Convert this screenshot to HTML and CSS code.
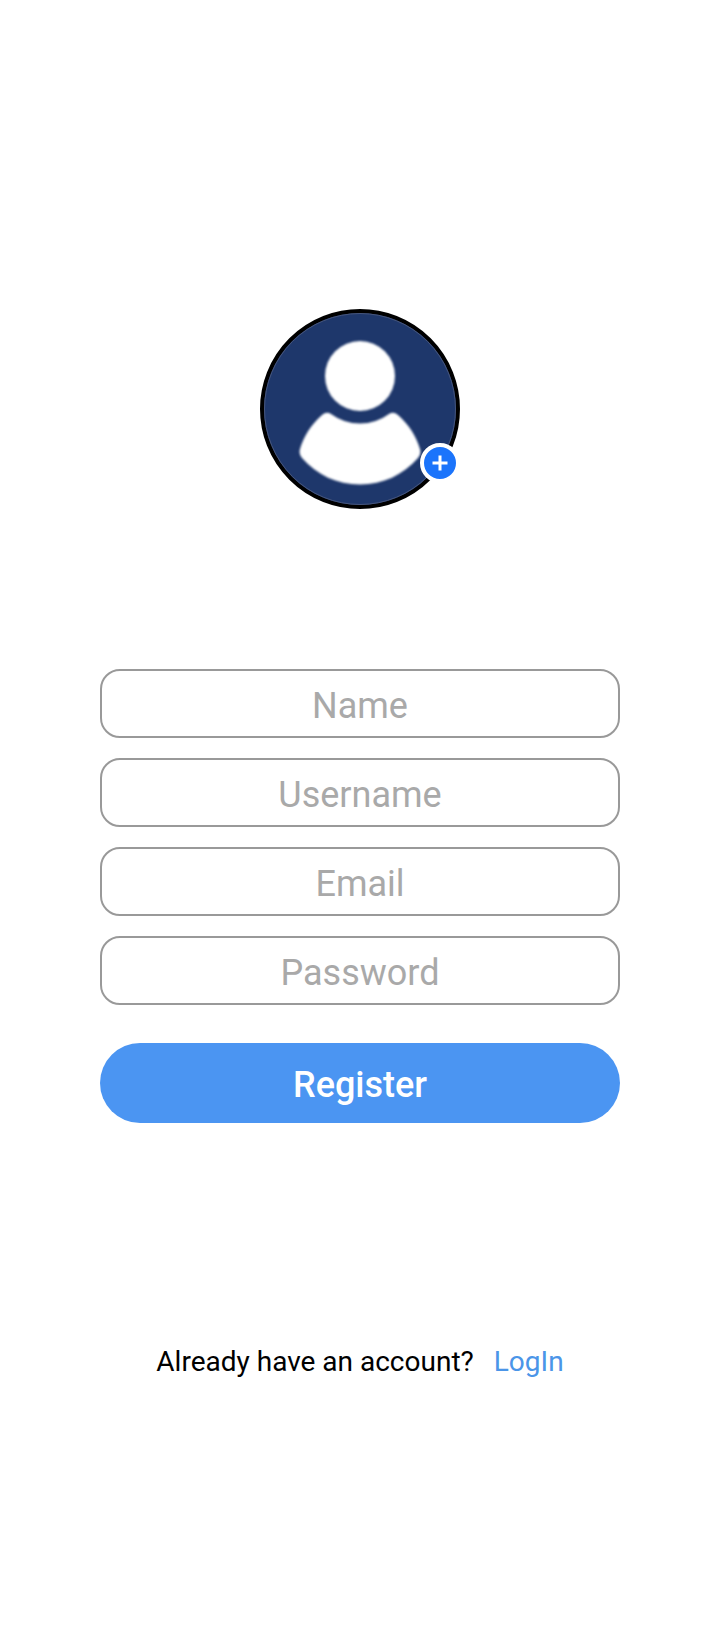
FILE: index.html
```html
<!DOCTYPE html>
<html lang="en">
<head>
  <meta charset="utf-8">
  <meta name="viewport" content="width=device-width, initial-scale=1">
  <title>Register</title>
  <link rel="stylesheet" href="styles.css">
</head>
<body>
  <main class="page">
    <div class="avatar">
      <svg class="avatar-picture" viewBox="0 0 200 200" aria-hidden="true">
        <circle cx="100" cy="100" r="98" fill="#1e376b" stroke="#000" stroke-width="4"/>
        <circle cx="100" cy="100" r="95.5" fill="none" stroke="#46557b" stroke-width="1"/>
        <g class="person" fill="#fff">
          <circle cx="100" cy="67" r="35"/>
          <path d="M71 105Q84 114.500 100 114.500T129 105Q133.500 102 138 106C149 115.500 156.500 128 160 140Q161.500 145 158 149C143 166 123 175.500 100 175.500S57 166 42 149Q38.500 145 40 140C43.500 128 51 115.500 62 106Q66.500 102 71 105Z"/>
        </g>
      </svg>
      <button class="avatar-add" type="button" aria-label="Add photo">
        <svg class="plus" viewBox="0 0 16 16" aria-hidden="true">
          <path d="M8 0.500V15.500M0.500 8H15.500" stroke="#fff" stroke-width="3"/>
        </svg>
      </button>
    </div>
    <form class="form">
      <input class="field" type="text" placeholder="Name" aria-label="Name">
      <input class="field" type="text" placeholder="Username" aria-label="Username">
      <input class="field" type="email" placeholder="Email" aria-label="Email">
      <input class="field" type="password" placeholder="Password" aria-label="Password">
      <button class="submit" type="submit">Register</button>
    </form>
    <p class="footer">
      <span>Already have an account?</span>
      <a class="login" href="#">LogIn</a>
    </p>
  </main>
</body>
</html>
```
FILE: styles.css
```css
* {
  box-sizing: border-box;
}

body {
  margin: 0;
  background: #fff;
  color: #000;
  font-family: Roboto, "Liberation Sans", sans-serif;
}

.page {
  display: flex;
  flex-direction: column;
  align-items: center;
  min-height: 100vh;
  padding: 309px 100px 100px;
}

.avatar {
  position: relative;
  width: 200px;
  height: 200px;
}

.avatar-picture {
  display: block;
  width: 100%;
  height: 100%;
}

.person {
  filter: blur(1px);
}

.avatar-add {
  position: absolute;
  right: 0;
  bottom: 26px;
  display: grid;
  place-items: center;
  width: 40px;
  height: 40px;
  padding: 0;
  border: 4px solid #fff;
  border-radius: 50%;
  background: #1b74fb;
}

.plus {
  width: 16px;
  height: 16px;
}

.form {
  display: flex;
  flex-direction: column;
  gap: 20px;
  width: 100%;
  margin-top: 160px;
}

.field {
  width: 100%;
  height: 69px;
  padding: 4px 20px 0;
  border: 2px solid #999;
  border-radius: 20px;
  background: #fff;
  color: #000;
  font: 400 36px/44px Roboto, "Liberation Sans", sans-serif;
  text-align: center;
}

.field::placeholder {
  color: #a9a9a9;
  opacity: 1;
}

.submit {
  height: 80px;
  margin-top: 18px;
  padding: 4px 20px 0;
  border: 0;
  border-radius: 40px;
  background: #4b95f2;
  color: #fff;
  font: 500 36px/44px Roboto, "Liberation Sans", sans-serif;
}

.footer {
  display: flex;
  flex-wrap: wrap;
  justify-content: center;
  gap: 20px;
  margin: 222px 0 0;
  font-size: 28px;
  line-height: 34px;
}

.login {
  color: #4b95e8;
  text-decoration: none;
}
```
